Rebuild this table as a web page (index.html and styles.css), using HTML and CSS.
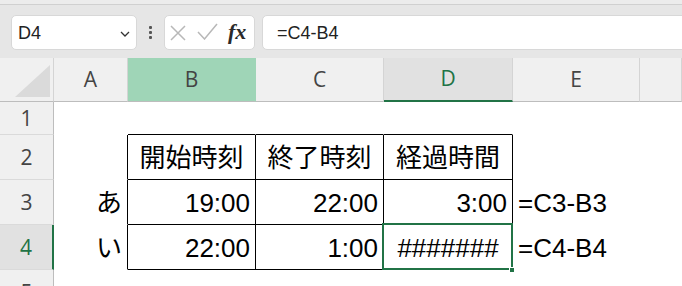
FILE: index.html
```html
<!DOCTYPE html>
<html lang="ja">
<head>
    <meta charset="UTF-8">
    <meta name="viewport" content="width=device-width, initial-scale=1.0">
    <title>Sheet1</title>
    <link rel="stylesheet" href="styles.css">
</head>
<body>

<div class="app">
    <div class="ribbon-edge"></div>

    <!-- Formula bar -->
    <div class="formula-bar">
        <div class="name-box">
            <span>D4</span>
            <svg class="chevron" width="10" height="6" viewBox="0 0 10 6"><path d="M1 1 L5 5 L9 1" fill="none" stroke="#333" stroke-width="1.3"/></svg>
        </div>
        <div class="grip"><i></i><i></i><i></i></div>
        <div class="fx-box">
            <svg width="16" height="16" viewBox="0 0 16 16"><path d="M1 1 L15 15 M15 1 L1 15" stroke="#b8b8b8" stroke-width="1.5"/></svg>
            <svg width="21" height="17" viewBox="0 0 21 17"><path d="M1 9 L7.5 16 L20 1" fill="none" stroke="#b8b8b8" stroke-width="1.5"/></svg>
            <span class="fx">fx</span>
        </div>
        <div class="formula-input">=C4-B4</div>
    </div>

    <!-- Grid -->
    <div class="sheet">
        <div class="corner">
            <svg width="53" height="43" viewBox="0 0 53 43"><polygon points="50,7 15,39 50,39" fill="#dadada"/></svg>
        </div>
        <div class="col-head">A</div>
        <div class="col-head col-mark">B</div>
        <div class="col-head">C</div>
        <div class="col-head col-active">D</div>
        <div class="col-head">E</div>
        <div class="col-head"></div>

        <div class="row-head">1</div>
        <div class="cell"></div>
        <div class="cell tt"></div>
        <div class="cell tt"></div>
        <div class="cell tt"></div>
        <div class="cell"></div>
        <div class="cell"></div>

        <div class="row-head">2</div>
        <div class="cell tl"></div>
        <div class="cell t c">開始時刻</div>
        <div class="cell t c">終了時刻</div>
        <div class="cell t c">経過時間</div>
        <div class="cell"></div>
        <div class="cell"></div>

        <div class="row-head">3</div>
        <div class="cell tl r">あ</div>
        <div class="cell t r">19:00</div>
        <div class="cell t r">22:00</div>
        <div class="cell t r">3:00</div>
        <div class="cell">=C3-B3</div>
        <div class="cell"></div>

        <div class="row-head row-active">4</div>
        <div class="cell tl r">い</div>
        <div class="cell t r">22:00</div>
        <div class="cell t r">1:00</div>
        <div class="cell t c active">#######<span class="sel"></span><span class="handle"></span></div>
        <div class="cell">=C4-B4</div>
        <div class="cell"></div>

        <div class="row-head">5</div>
        <div class="cell"></div>
        <div class="cell"></div>
        <div class="cell"></div>
        <div class="cell"></div>
        <div class="cell"></div>
        <div class="cell"></div>
    </div>
</div>

</body>
</html>
```

FILE: styles.css
```css
* {
    box-sizing: border-box;
}
body {
    margin: 0;
    font-family: "Liberation Sans", "Noto Sans CJK JP", sans-serif;
    background-color: #fff;
    overflow: hidden;
}
.app {
    width: 682px;
    height: 286px;
    overflow: hidden;
}
.ribbon-edge {
    height: 5px;
    background-color: #ececec;
    border-bottom: 1px solid #d0d0d0;
}

/* formula bar */
.formula-bar {
    display: flex;
    align-items: flex-start;
    height: 53px;
    padding: 10px 0 0 11px;
    background-color: #e6e6e6;
}
.name-box, .fx-box, .formula-input {
    height: 35px;
    background-color: #fff;
    border: 1px solid #d8d8d8;
    border-radius: 5px;
    display: flex;
    align-items: center;
}
.name-box {
    width: 126px;
    padding: 2px 6px 0 6px;
    justify-content: space-between;
    font-size: 18px;
    color: #222;
}
.grip {
    width: 27px;
    padding-top: 11px;
    display: flex;
    flex-direction: column;
    align-items: center;
    gap: 2px;
}
.grip i {
    width: 3px;
    height: 3px;
    background-color: #555;
    border-radius: 1px;
}
.fx-box {
    width: 91px;
    padding-left: 5px;
    gap: 11px;
}
.fx-box svg:nth-child(2) {
    margin-top: -3px;
}
.fx {
    font-family: "Liberation Serif", serif;
    font-style: italic;
    font-weight: bold;
    font-size: 22px;
    color: #2a2a2a;
    margin-left: -1px;
    margin-top: -2px;
}
.formula-input {
    flex: 1;
    margin-left: 7px;
    margin-right: -10px;
    padding: 2px 0 0 14px;
    font-size: 18px;
    color: #222;
}

/* sheet grid */
.sheet {
    display: grid;
    grid-template-columns: 54px 74px 128px 128px 129px 127px 1fr;
    grid-template-rows: 44px 33px 45px 45px 45px 45px;
}
.corner, .col-head, .row-head {
    background-color: #f0f0f0;
    font-family: "Open Sans", sans-serif;
    font-size: 21px;
    color: #444;
    display: flex;
    align-items: center;
    justify-content: center;
}
.corner {
    border-right: 1px solid #d4d4d4;
    border-bottom: 1px solid #bdbdbd;
    align-items: flex-start;
    justify-content: flex-start;
}
.col-head {
    border-right: 1px solid #d4d4d4;
    border-bottom: 1px solid #bdbdbd;
    padding-bottom: 2px;
}
.col-mark {
    background-color: #9fd5b7;
    border-right-color: #9fd5b7;
}
.col-active {
    background-color: #e1e1e1;
    color: #217346;
    border-bottom: 2px solid #217346;
}
.row-head {
    border-right: 1px solid #bdbdbd;
    border-bottom: 1px solid #dadada;
}
.row-active {
    background-color: #e1e1e1;
    color: #217346;
    border-right: 2px solid #217346;
}

/* cells */
.cell {
    display: flex;
    align-items: center;
    padding: 2px 5px 0 5px;
    font-size: 26px;
    line-height: 26px;
    color: #000;
    white-space: nowrap;
    border-right: 1px solid transparent;
    border-bottom: 1px solid transparent;
}
.cell.r {
    justify-content: flex-end;
}
.cell.c {
    justify-content: center;
}
.cell.t {
    border-right-color: #000;
    border-bottom-color: #000;
}
.cell.tl {
    border-right-color: #000;
}
.cell.tt {
    border-bottom-color: #000;
}
.cell.active {
    position: relative;
}
.sel {
    position: absolute;
    left: -2px;
    top: -2px;
    right: -1px;
    bottom: -1px;
    border: 2px solid #217346;
}
.handle {
    position: absolute;
    right: -3px;
    bottom: -4px;
    width: 6px;
    height: 6px;
    background-color: #217346;
    border: 1px solid #fff;
}
```
